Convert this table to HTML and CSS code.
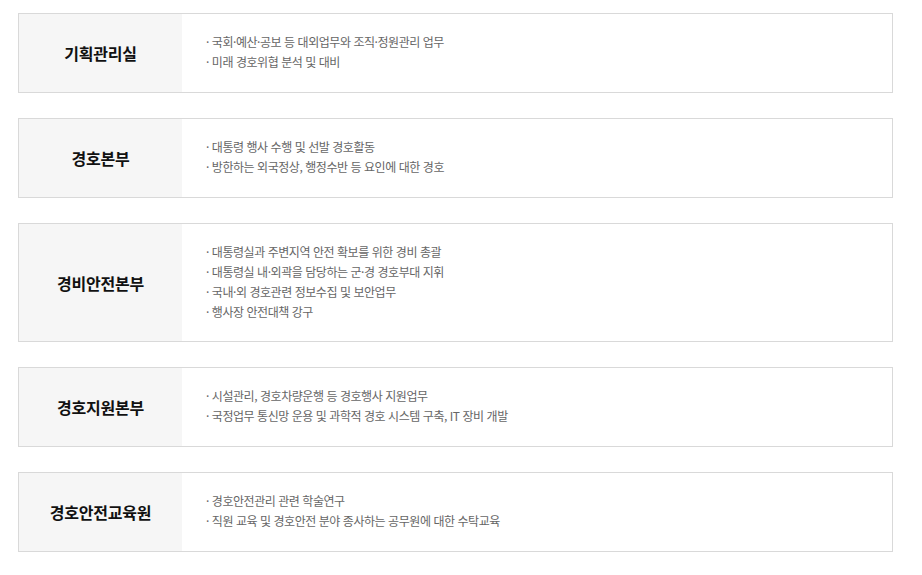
FILE: index.html
```html
<!DOCTYPE html>
<html lang="ko">
<head>
<meta charset="utf-8">
<link rel="stylesheet" href="styles.css">
</head>
<body>
<div class="org-list">
  <div class="org">
    <div class="org-name">기획관리실</div>
    <ul class="org-desc">
      <li>· 국회·예산·공보 등 대외업무와 조직·정원관리 업무</li>
      <li>· 미래 경호위협 분석 및 대비</li>
    </ul>
  </div>
  <div class="org">
    <div class="org-name">경호본부</div>
    <ul class="org-desc">
      <li>· 대통령 행사 수행 및 선발 경호활동</li>
      <li>· 방한하는 외국정상, 행정수반 등 요인에 대한 경호</li>
    </ul>
  </div>
  <div class="org">
    <div class="org-name">경비안전본부</div>
    <ul class="org-desc">
      <li>· 대통령실과 주변지역 안전 확보를 위한 경비 총괄</li>
      <li>· 대통령실 내·외곽을 담당하는 군·경 경호부대 지휘</li>
      <li>· 국내·외 경호관련 정보수집 및 보안업무</li>
      <li>· 행사장 안전대책 강구</li>
    </ul>
  </div>
  <div class="org">
    <div class="org-name">경호지원본부</div>
    <ul class="org-desc">
      <li>· 시설관리, 경호차량운행 등 경호행사 지원업무</li>
      <li>· 국정업무 통신망 운용 및 과학적 경호 시스템 구축, IT 장비 개발</li>
    </ul>
  </div>
  <div class="org">
    <div class="org-name">경호안전교육원</div>
    <ul class="org-desc">
      <li>· 경호안전관리 관련 학술연구</li>
      <li>· 직원 교육 및 경호안전 분야 종사하는 공무원에 대한 수탁교육</li>
    </ul>
  </div>
</div>
</body>
</html>
```

FILE: styles.css
```css
html, body {
  margin: 0;
  padding: 0;
  background: #fff;
}
body {
  font-family: "Noto Sans CJK KR", "Noto Sans", sans-serif;
}
.org-list {
  display: flex;
  flex-direction: column;
  gap: 25px;
  padding: 13px 29px 0 18px;
}
.org {
  display: flex;
  border: 1px solid #d9d9d9;
  min-height: 78px;
}
.org-name {
  width: 163px;
  flex: none;
  background: #f6f6f6;
  display: flex;
  align-items: center;
  justify-content: center;
  font-size: 16px;
  font-weight: 700;
  color: #111;
  letter-spacing: -0.2px;
}
.org-desc {
  list-style: none;
  margin: 0;
  padding: 18px 0 19px 24px;
  font-size: 12px;
  line-height: 20px;
  color: #666;
  letter-spacing: -0.45px;
}
```
